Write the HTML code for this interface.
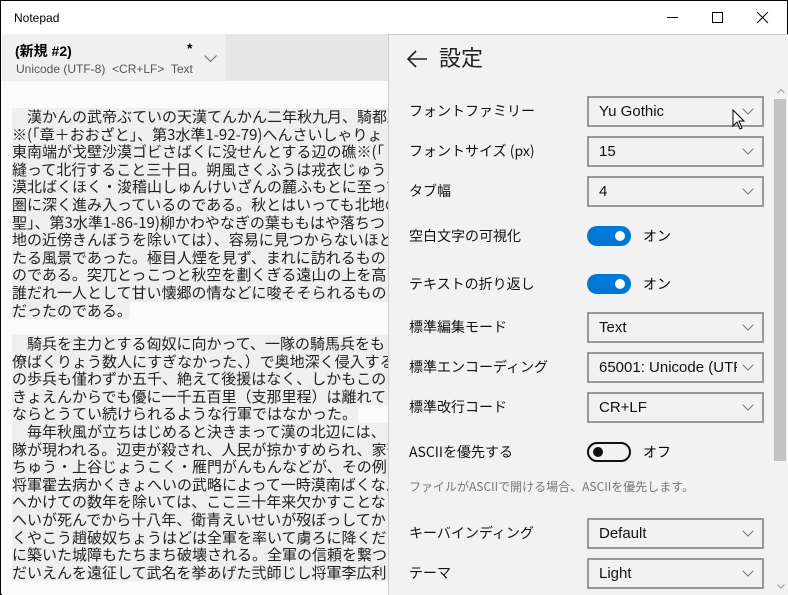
<!DOCTYPE html>
<html><head><meta charset="utf-8"><style>
*{margin:0;padding:0;box-sizing:border-box}
body{width:788px;height:595px;overflow:hidden;background:#fff;font-family:"Liberation Sans","Noto Sans CJK JP",sans-serif;position:relative}
.win{position:absolute;left:0;top:0;width:788px;height:595px;border:1px solid #000}
.title{position:absolute;left:13px;top:10px;font-size:12px;color:#000}
.ctl{position:absolute;top:8px;font-size:14px}
.tabbar{position:absolute;left:1px;top:33px;width:386px;height:47px;background:#e6e6e6}
.tab{position:absolute;left:0;top:0;width:224px;height:47px;background:#f0f0f0}
.editor{position:absolute;left:1px;top:80px;width:386px;height:514px;background:#fbfbfb;overflow:hidden}
.ln{position:absolute;left:10px;height:17.6px;background:#efefef;font-size:15px;line-height:17.6px;color:#222;white-space:nowrap;font-family:"Noto Sans CJK JP",sans-serif;width:376px;overflow:hidden}
.panel{position:absolute;left:387px;top:33px;width:400px;height:561px;background:#f2f2f2;border-left:1px solid #ccc;border-top:1px solid #ccc}
.lbl{position:absolute;left:20px;font-size:14px;color:#111;font-family:"Noto Sans CJK JP",sans-serif}
.dd{position:absolute;left:198px;width:177px;height:31px;border:2px solid #999;background:#f2f2f2;font-size:15px;line-height:27px;color:#111}
.dd span{position:absolute;left:10px;top:0;width:138px;overflow:hidden;white-space:nowrap}
.dd svg{position:absolute;right:8px;top:10px}
.tg{position:absolute;left:198px;width:44px;height:20px;border-radius:10px;background:#0078d7}
.tg::after{content:"";position:absolute;right:6px;top:5px;width:10px;height:10px;border-radius:5px;background:#fff}
.tgoff{background:transparent;border:2px solid #111}
.tgoff::after{left:4px;right:auto;top:3px;background:#111}
.st{position:absolute;left:254px;font-size:14px;font-family:"Noto Sans CJK JP",sans-serif}
</style></head><body>
<div class="win">
<div class="title">Notepad</div>
<svg class="ctl" style="left:666px;top:16px" width="12" height="2"><rect width="11" height="1" fill="#000"/></svg>
<svg class="ctl" style="left:711px;top:11px" width="12" height="12"><rect x=".5" y=".5" width="10" height="10" fill="none" stroke="#000"/></svg>
<svg class="ctl" style="left:756px;top:11px" width="12" height="12"><path d="M0 0L11 11M11 0L0 11" stroke="#000"/></svg>
<div class="tabbar"><div class="tab">
<div style="position:absolute;left:13px;top:7px;font-size:14px;font-weight:bold;font-family:'Liberation Sans','Noto Sans CJK JP',sans-serif">(新規 #2)</div>
<div style="position:absolute;left:185px;top:6px;font-size:14px;font-weight:bold">*</div>
<div style="position:absolute;left:14px;top:28px;font-size:12px;color:#555">Unicode (UTF-8)&nbsp; &lt;CR+LF&gt;&nbsp; Text</div>
<svg style="position:absolute;left:202px;top:21px" width="13" height="8"><path d="M.5 .5L6.5 6.5L12.5 .5" fill="none" stroke="#666"/></svg>
</div></div>
<div class="editor">
<div class="ln" style="top:27px">　漢かんの武帝ぶていの天漢てんかん二年秋九月、騎都尉</div>
<div class="ln" style="top:44.6px">※(「章＋おおざと」、第3水準1-92-79)へんさいしゃりょ</div>
<div class="ln" style="top:62.2px">東南端が戈壁沙漠ゴビさばくに没せんとする辺の礁※(「</div>
<div class="ln" style="top:79.8px">縫って北行すること三十日。朔風さくふうは戎衣じゅうい</div>
<div class="ln" style="top:97.4px">漠北ばくほく・浚稽山しゅんけいざんの麓ふもとに至って</div>
<div class="ln" style="top:115px">圏に深く進み入っているのである。秋とはいっても北地の</div>
<div class="ln" style="top:132.6px">聖」、第3水準1-86-19)柳かわやなぎの葉ももはや落ちつ</div>
<div class="ln" style="top:150.2px">地の近傍きんぼうを除いては）、容易に見つからないほど</div>
<div class="ln" style="top:167.8px">たる風景であった。極目人煙を見ず、まれに訪れるものと</div>
<div class="ln" style="top:185.4px">のである。突兀とっこつと秋空を劃くぎる遠山の上を高く</div>
<div class="ln" style="top:203px">誰だれ一人として甘い懐郷の情などに唆そそられるものは</div>
<div class="ln" style="top:220.6px;width:118px">だったのである。</div>
<div class="ln" style="top:254px">　騎兵を主力とする匈奴に向かって、一隊の騎馬兵をも</div>
<div class="ln" style="top:271.6px">僚ばくりょう数人にすぎなかった、）で奥地深く侵入する</div>
<div class="ln" style="top:289.2px">の歩兵も僅わずか五千、絶えて後援はなく、しかもこの</div>
<div class="ln" style="top:306.8px">きょえんからでも優に一千五百里（支那里程）は離れて</div>
<div class="ln" style="top:324.4px;width:346px">ならとうてい続けられるような行軍ではなかった。</div>
<div class="ln" style="top:342px">　毎年秋風が立ちはじめると決きまって漢の北辺には、</div>
<div class="ln" style="top:359.6px">隊が現われる。辺吏が殺され、人民が掠かすめられ、家畜</div>
<div class="ln" style="top:377.2px">ちゅう・上谷じょうこく・雁門がんもんなどが、その例</div>
<div class="ln" style="top:394.8px">将軍霍去病かくきょへいの武略によって一時漠南ばくなん</div>
<div class="ln" style="top:412.4px">へかけての数年を除いては、ここ三十年来欠かすことなく</div>
<div class="ln" style="top:430px">へいが死んでから十八年、衛青えいせいが歿ぼっしてから</div>
<div class="ln" style="top:447.6px">くやこう趙破奴ちょうはどは全軍を率いて虜ろに降くだっ</div>
<div class="ln" style="top:465.2px">に築いた城障もたちまち破壊される。全軍の信頼を繋つな</div>
<div class="ln" style="top:482.8px">だいえんを遠征して武名を挙あげた弐師じし将軍李広利</div>
</div>
<div class="panel">
<svg style="position:absolute;left:17px;top:14px" width="22" height="20"><path d="M21 10H2M10 2L2 10L10 18" fill="none" stroke="#222" stroke-width="1.6"/></svg>
<div style="position:absolute;left:50px;top:6px;font-size:22px;color:#222;font-family:'Noto Sans CJK JP',sans-serif">設定</div>
<div class="lbl" style="top:66px">フォントファミリー</div>
<div class="dd" style="top:61px"><span>Yu Gothic</span><svg width="12" height="7"><path d="M.5 .5L6 6L11.5 .5" fill="none" stroke="#777"/></svg></div>
<div class="lbl" style="top:106px">フォントサイズ (px)</div>
<div class="dd" style="top:101px"><span>15</span><svg width="12" height="7"><path d="M.5 .5L6 6L11.5 .5" fill="none" stroke="#777"/></svg></div>
<div class="lbl" style="top:146px">タブ幅</div>
<div class="dd" style="top:141px"><span>4</span><svg width="12" height="7"><path d="M.5 .5L6 6L11.5 .5" fill="none" stroke="#777"/></svg></div>
<div class="lbl" style="top:191px">空白文字の可視化</div>
<div class="tg" style="top:191px"></div><div class="st" style="top:191px">オン</div>
<div class="lbl" style="top:239px">テキストの折り返し</div>
<div class="tg" style="top:239px"></div><div class="st" style="top:239px">オン</div>
<div class="lbl" style="top:282px">標準編集モード</div>
<div class="dd" style="top:277px"><span>Text</span><svg width="12" height="7"><path d="M.5 .5L6 6L11.5 .5" fill="none" stroke="#777"/></svg></div>
<div class="lbl" style="top:322px">標準エンコーディング</div>
<div class="dd" style="top:317px"><span>65001: Unicode (UTF-8)</span><svg width="12" height="7"><path d="M.5 .5L6 6L11.5 .5" fill="none" stroke="#777"/></svg></div>
<div class="lbl" style="top:362px">標準改行コード</div>
<div class="dd" style="top:357px"><span>CR+LF</span><svg width="12" height="7"><path d="M.5 .5L6 6L11.5 .5" fill="none" stroke="#777"/></svg></div>
<div class="lbl" style="top:407px">ASCIIを優先する</div>
<div class="tg tgoff" style="top:407px"></div><div class="st" style="top:407px">オフ</div>
<div class="lbl" style="top:443px;font-size:12px;color:#777">ファイルがASCIIで開ける場合、ASCIIを優先します。</div>
<div class="lbl" style="top:488px">キーバインディング</div>
<div class="dd" style="top:483px"><span>Default</span><svg width="12" height="7"><path d="M.5 .5L6 6L11.5 .5" fill="none" stroke="#777"/></svg></div>
<div class="lbl" style="top:528px">テーマ</div>
<div class="dd" style="top:523px"><span>Light</span><svg width="12" height="7"><path d="M.5 .5L6 6L11.5 .5" fill="none" stroke="#777"/></svg></div>
<svg style="position:absolute;left:388px;top:54px" width="8" height="5"><path d="M.5 4L4 .5L7.5 4" fill="none" stroke="#999"/></svg>
<div style="position:absolute;left:385px;top:64px;width:12px;height:362px;background:#c2c2c2"></div>
<svg style="position:absolute;left:388px;top:549px" width="8" height="5"><path d="M.5 .5L4 4L7.5 .5" fill="none" stroke="#999"/></svg>
</div>
<svg style="position:absolute;left:731px;top:108px" width="14" height="22"><path d="M1 1V17L5 13L8 20L10 19L7 12H12Z" fill="#fff" stroke="#000"/></svg>
</div>
</body></html>
